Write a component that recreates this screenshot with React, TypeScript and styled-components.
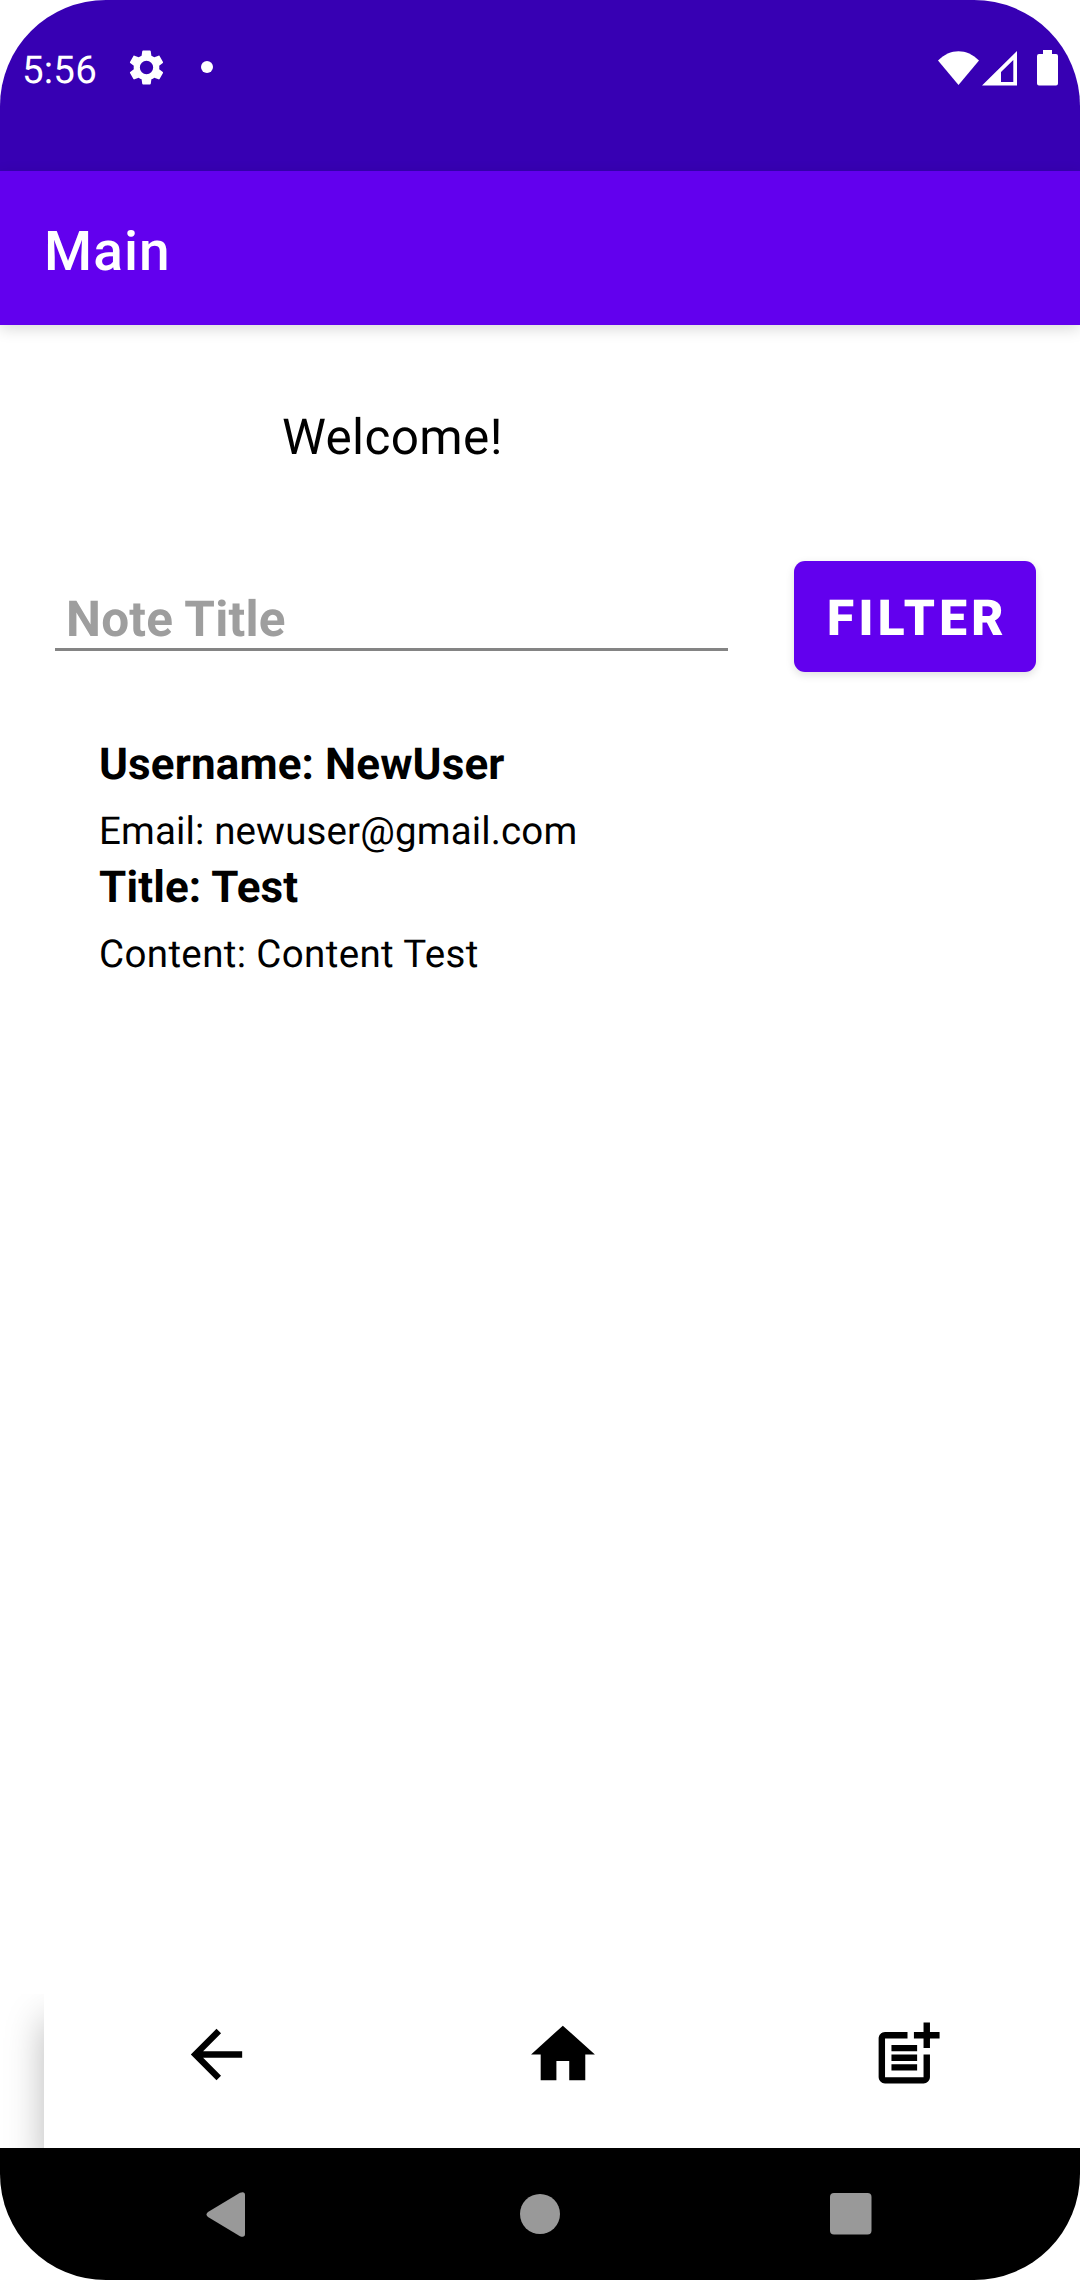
import React from "react";
import styled, { createGlobalStyle } from "styled-components";

const GlobalStyle = createGlobalStyle`
  * { box-sizing: border-box; }
  body { margin: 0; background: #fff; }
`;

const Screen = styled.div`
  width: 1080px;
  height: 2280px;
  display: flex;
  flex-direction: column;
  overflow: hidden;
  border-radius: 106px;
  background: #fff;
  color: #000;
  font-family: Roboto, "Liberation Sans", sans-serif;
  text-rendering: geometricPrecision;
`;

const StatusBar = styled.header`
  height: 171px;
  flex: none;
  padding: 44px 22px 0 22px;
  display: flex;
  align-items: flex-start;
  justify-content: space-between;
  background: #3700b3;
  color: #fff;
`;

const StatusGroup = styled.div`
  height: 47px;
  display: flex;
  align-items: center;
`;

const Clock = styled.time`
  width: 104px;
  padding-top: 5px;
  font-size: 38.5px;
  line-height: 47px;
  letter-spacing: 0.2px;
`;

const NotificationDot = styled.span`
  width: 12px;
  height: 12px;
  margin: -1px 0 0 34px;
  border-radius: 50%;
  background: #fff;
`;

const Glyph = styled.svg<{ $gap?: number }>`
  display: block;
  flex: none;
  margin-left: ${(p) => p.$gap ?? 0}px;
  fill: currentColor;
`;

const AppBar = styled.div`
  height: 154px;
  flex: none;
  display: flex;
  align-items: center;
  padding: 8px 44px 0;
  background: #6200ee;
  box-shadow: 0 4px 14px rgba(0, 0, 0, 0.15);
`;

const Title = styled.h1`
  margin: 0;
  color: #fff;
  font-size: 55px;
  font-weight: 500;
  line-height: 64px;
  letter-spacing: 1.1px;
`;

const Content = styled.main`
  flex: 1;
  display: flex;
  flex-direction: column;
`;

const Welcome = styled.p`
  margin: 84px 0 0 282px;
  font-size: 49.5px;
  line-height: 58px;
  letter-spacing: 0.35px;
`;

const FilterRow = styled.form`
  margin-top: 94px;
  padding: 0 44px 0 55px;
  height: 111px;
  display: flex;
  align-items: flex-start;
  justify-content: space-between;
`;

const NoteField = styled.input`
  width: 673px;
  height: 90px;
  padding: 31px 11px 0;
  border: 0;
  border-bottom: 3px solid #848484;
  outline: none;
  background: transparent;
  font: 700 49.5px/56px Roboto, "Liberation Sans", sans-serif;
  text-rendering: inherit;
  letter-spacing: 0.2px;
  &::placeholder {
    color: #9e9e9e;
    opacity: 1;
  }
`;

const FilterButton = styled.button`
  width: 242px;
  height: 111px;
  padding: 5px 0 0 5px;
  border: 0;
  border-radius: 11px;
  background: #6200ee;
  color: #fff;
  box-shadow: 0 3px 8px rgba(0, 0, 0, 0.13);
  font: 900 49.5px/58px Roboto, "Liberation Sans", sans-serif;
  text-rendering: inherit;
  letter-spacing: 4.3px;
`;

const Note = styled.article`
  margin: 66px 0 0 99px;
`;

const NoteHeading = styled.div`
  font-size: 44px;
  font-weight: 700;
  line-height: 52px;
  letter-spacing: 0.12px;
`;

const NoteText = styled.div<{ $tracking: number }>`
  padding: 12px 0 0;
  height: 71px;
  font-size: 38.5px;
  line-height: 60px;
  letter-spacing: ${(p) => p.$tracking}px;
`;

const BottomArea = styled.footer`
  height: 154px;
  flex: none;
  padding-left: 44px;
  overflow: hidden;
`;

const BottomBar = styled.nav`
  height: 154px;
  display: grid;
  grid-template-columns: 345px 346px 345px;
  justify-items: center;
  padding-top: 22px;
  background: #fff;
  box-shadow: 0 26px 36px rgba(0, 0, 0, 0.28);
`;

const SystemBar = styled.div`
  height: 132px;
  flex: none;
  display: flex;
  align-items: center;
  justify-content: space-between;
  padding: 0 208px 0 206px;
  background: #000;
  color: #999;
`;

const actions = [
  { name: "Back", path: "M20 11H7.83l5.59-5.59L12 4l-8 8 8 8 1.41-1.41L7.83 13H20v-2z" },
  { name: "Home", path: "M10.1 20v-6h4v6h5v-8h3L12.1 3 2.2 12h3v8z" },
  {
    name: "Add note",
    path: "M17 19.1H5V7h7V5H5c-1.1 0-2 .9-2 2v12c0 1.1.9 2 2 2h12c1.1 0 2-.9 2-2v-7h-2zM19 2h-2v3h-3v2h3v3h2V7h3V5h-3zM7 9h8v2H7zM7 12h8v2H7zM7 15h8v2H7z",
  },
];

export default function App() {
  return (
    <>
      <GlobalStyle />
      <Screen>
        <StatusBar>
          <StatusGroup>
            <Clock>5:56</Clock>
            <Glyph width="41" height="41" viewBox="0 0 24 24">
              <path d="M19.43 12.98c.04-.32.07-.64.07-.98s-.03-.66-.07-.98l2.11-1.65c.19-.15.24-.42.12-.64l-2-3.46c-.12-.22-.39-.3-.61-.22l-2.49 1c-.52-.4-1.08-.73-1.69-.98l-.38-2.65C14.46 2.18 14.25 2 14 2h-4c-.25 0-.46.18-.49.42l-.38 2.65c-.61.25-1.17.59-1.69.98l-2.49-1c-.23-.09-.49 0-.61.22l-2 3.46c-.13.22-.07.49.12.64l2.11 1.65c-.04.32-.07.65-.07.98s.03.66.07.98l-2.11 1.65c-.19.15-.24.42-.12.64l2 3.46c.12.22.39.3.61.22l2.49-1c.52.4 1.08.73 1.69.98l.38 2.65c.03.24.24.42.49.42h4c.25 0 .46-.18.49-.42l.38-2.65c.61-.25 1.17-.59 1.69-.98l2.49 1c.23.09.49 0 .61-.22l2-3.46c.12-.22.07-.49-.12-.64l-2.11-1.65zM12 15.9a3.9 3.9 0 1 1 0-7.8 3.9 3.9 0 0 1 0 7.8z" />
            </Glyph>
            <NotificationDot />
          </StatusGroup>
          <StatusGroup>
            <Glyph width="41" height="36" viewBox="0 0 41 36">
              <path d="M0 10.5C12 -2 29 -2 41 10.5L20.5 35z" />
            </Glyph>
            <Glyph $gap={3} width="35" height="36" viewBox="0 0 35 36">
              <path fillRule="evenodd" d="M35 1V35.6H0zM31.3 10L19 22V32H31.3z" />
            </Glyph>
            <Glyph $gap={20} width="21" height="36" viewBox="0 0 21 36">
              <path d="M6 0H15V4H19Q21 4 21 6V33.5Q21 35.5 19 35.5H2Q0 35.5 0 33.5V6Q0 4 2 4H6z" />
            </Glyph>
          </StatusGroup>
        </StatusBar>
        <AppBar>
          <Title>Main</Title>
        </AppBar>
        <Content>
          <Welcome>Welcome!</Welcome>
          <FilterRow onSubmit={(e) => e.preventDefault()}>
            <NoteField placeholder="Note Title" />
            <FilterButton>FILTER</FilterButton>
          </FilterRow>
          <Note>
            <NoteHeading>Username: NewUser</NoteHeading>
            <NoteText $tracking={0.14}>Email: newuser@gmail.com</NoteText>
            <NoteHeading>Title: Test</NoteHeading>
            <NoteText $tracking={0.37}>Content: Content Test</NoteText>
          </Note>
        </Content>
        <BottomArea>
          <BottomBar>
            {actions.map((a) => (
              <Glyph key={a.name} width="77" height="77" viewBox="0 0 24 24" aria-label={a.name}>
                <path d={a.path} />
              </Glyph>
            ))}
          </BottomBar>
        </BottomArea>
        <SystemBar>
          <Glyph width="39" height="45" viewBox="0 0 39 45">
            <path d="M2 20L34 .8Q39 -1 39 3V42Q39 46 34 44.2L2 25Q-1 22.5 2 20z" />
          </Glyph>
          <Glyph $gap={4} width="40" height="40" viewBox="0 0 40 40">
            <circle cx="20" cy="20" r="20" />
          </Glyph>
          <Glyph width="42" height="42" viewBox="0 0 42 42">
            <rect width="41.5" height="41.5" rx="4" />
          </Glyph>
        </SystemBar>
      </Screen>
    </>
  );
}
